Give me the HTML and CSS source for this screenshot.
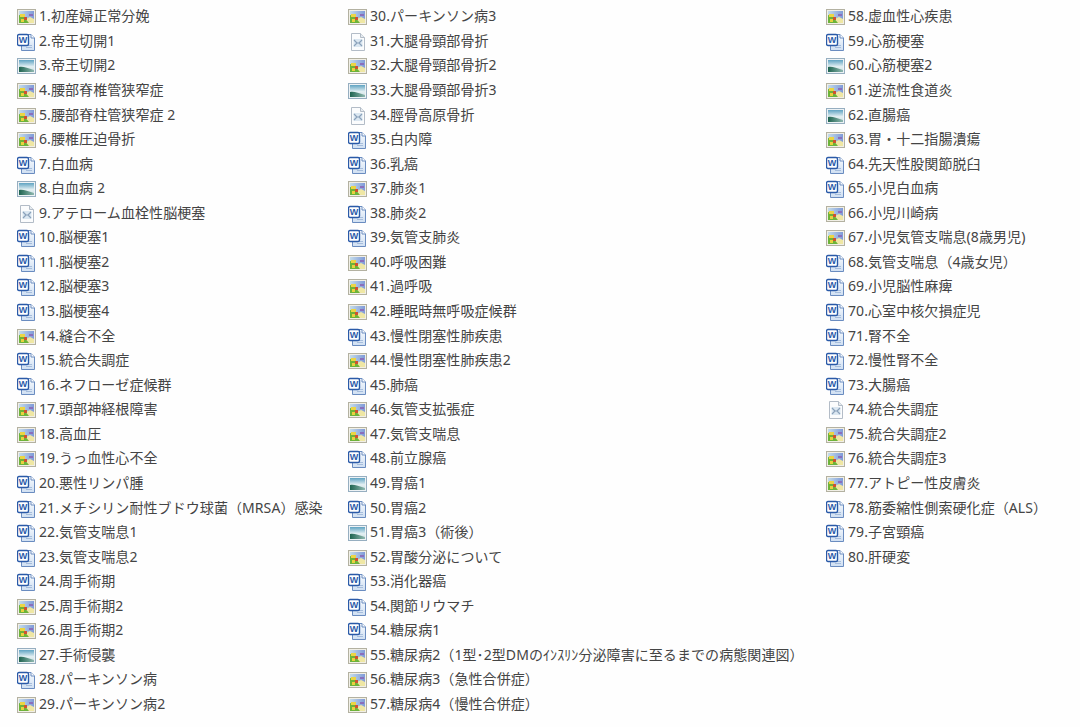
FILE: index.html
```html
<!DOCTYPE html>
<html lang="ja">
<head>
    <meta charset="UTF-8">
    <title>疾患別 関連図 一覧</title>
    <link rel="stylesheet" href="styles.css">
</head>
<body>
    <!-- icon sheet -->
    <svg class="icon-defs" aria-hidden="true">
        <defs>
            <linearGradient id="skyPic" x1="0" y1="0" x2="1" y2="0">
                <stop offset="0" stop-color="#c4dcea"/>
                <stop offset="1" stop-color="#7f9ad8"/>
            </linearGradient>
            <linearGradient id="skyLand" x1="0" y1="0" x2="0" y2="1">
                <stop offset="0" stop-color="#5fa3c2"/>
                <stop offset="0.55" stop-color="#e2eff2"/>
                <stop offset="1" stop-color="#cfe0e2"/>
            </linearGradient>
            <linearGradient id="hillLand" x1="0" y1="0" x2="1" y2="0">
                <stop offset="0" stop-color="#1f6450"/>
                <stop offset="1" stop-color="#8fb8b0"/>
            </linearGradient>
            <linearGradient id="pageBlue" x1="0" y1="0" x2="0" y2="1">
                <stop offset="0" stop-color="#f8fbfe"/>
                <stop offset="1" stop-color="#cfdff2"/>
            </linearGradient>
            <symbol id="pic" viewBox="0 0 19 18">
                <rect x="0.5" y="1.5" width="18" height="15" fill="#f1efe6" stroke="#b3b1a1"/>
                <rect x="2" y="3" width="15" height="12" fill="url(#skyPic)"/>
                <path d="M9 11 L13 9 L17 11 L17 15 L9 15 Z" fill="#efe7a4"/>
                <path d="M2 7 L6 8 L12 15 L2 15 Z" fill="#6db33a"/>
                <rect x="3" y="6" width="5" height="3" fill="#ecd544"/>
                <rect x="4" y="11" width="3" height="3" fill="#e8d23e"/>
                <rect x="7" y="9" width="3" height="3" fill="#cf5230"/>
                <rect x="12" y="6" width="4" height="2" fill="#8a6fbc"/>
            </symbol>
            <symbol id="word" viewBox="0 0 19 18">
                <path d="M4.5 1.5 H14 L17.5 5 V17.5 H4.5 Z" fill="url(#pageBlue)" stroke="#6a8cc0"/>
                <path d="M14 1.5 V5 H17.5" fill="#fff" stroke="#6a8cc0"/>
                <path d="M9 12.5 H15 M9 14.5 H15" stroke="#a6bddc"/>
                <rect x="0.5" y="1.5" width="11" height="11" rx="1.5" fill="#fff" stroke="#2a5aa8" stroke-width="1.4"/>
                <text class="word-mark" x="6" y="10.4">W</text>
            </symbol>
            <symbol id="land" viewBox="0 0 19 18">
                <rect x="0.5" y="1.5" width="18" height="15" fill="#edf2f5" stroke="#96aec0"/>
                <rect x="2" y="3" width="15" height="12" fill="url(#skyLand)"/>
                <path d="M2 10 C6 9 10 11 17 13 V15 H2 Z" fill="url(#hillLand)"/>
            </symbol>
            <symbol id="blank" viewBox="0 0 19 18">
                <path d="M3.5 0.5 H12.5 L16.5 4.5 V17.5 H3.5 Z" fill="#fbfcfd" stroke="#b3bcc7"/>
                <path d="M12.5 0.5 V4.5 H16.5" fill="#e6ebf0" stroke="#b3bcc7"/>
                <rect x="5.5" y="6" width="9" height="8" fill="#dbe7f1"/>
                <path d="M6 7 L9 10 L6 13 M14 7 L11 10 L14 13 M9 10 H11" fill="none" stroke="#8aa1ba" stroke-width="1.2"/>
            </symbol>
        </defs>
    </svg>

    <div class="file-list">
        <ul class="file-column">
            <li class="file-row"><svg class="file-icon"><use href="#pic"/></svg><span>1.初産婦正常分娩</span></li>
            <li class="file-row"><svg class="file-icon"><use href="#word"/></svg><span>2.帝王切開1</span></li>
            <li class="file-row"><svg class="file-icon"><use href="#land"/></svg><span>3.帝王切開2</span></li>
            <li class="file-row"><svg class="file-icon"><use href="#pic"/></svg><span>4.腰部脊椎管狭窄症</span></li>
            <li class="file-row"><svg class="file-icon"><use href="#pic"/></svg><span>5.腰部脊柱管狭窄症 2</span></li>
            <li class="file-row"><svg class="file-icon"><use href="#pic"/></svg><span>6.腰椎圧迫骨折</span></li>
            <li class="file-row"><svg class="file-icon"><use href="#word"/></svg><span>7.白血病</span></li>
            <li class="file-row"><svg class="file-icon"><use href="#land"/></svg><span>8.白血病 2</span></li>
            <li class="file-row"><svg class="file-icon"><use href="#blank"/></svg><span>9.アテローム血栓性脳梗塞</span></li>
            <li class="file-row"><svg class="file-icon"><use href="#word"/></svg><span>10.脳梗塞1</span></li>
            <li class="file-row"><svg class="file-icon"><use href="#word"/></svg><span>11.脳梗塞2</span></li>
            <li class="file-row"><svg class="file-icon"><use href="#word"/></svg><span>12.脳梗塞3</span></li>
            <li class="file-row"><svg class="file-icon"><use href="#word"/></svg><span>13.脳梗塞4</span></li>
            <li class="file-row"><svg class="file-icon"><use href="#pic"/></svg><span>14.縫合不全</span></li>
            <li class="file-row"><svg class="file-icon"><use href="#word"/></svg><span>15.統合失調症</span></li>
            <li class="file-row"><svg class="file-icon"><use href="#word"/></svg><span>16.ネフローゼ症候群</span></li>
            <li class="file-row"><svg class="file-icon"><use href="#pic"/></svg><span>17.頭部神経根障害</span></li>
            <li class="file-row"><svg class="file-icon"><use href="#pic"/></svg><span>18.高血圧</span></li>
            <li class="file-row"><svg class="file-icon"><use href="#pic"/></svg><span>19.うっ血性心不全</span></li>
            <li class="file-row"><svg class="file-icon"><use href="#word"/></svg><span>20.悪性リンパ腫</span></li>
            <li class="file-row"><svg class="file-icon"><use href="#word"/></svg><span>21.メチシリン耐性ブドウ球菌（MRSA）感染</span></li>
            <li class="file-row"><svg class="file-icon"><use href="#word"/></svg><span>22.気管支喘息1</span></li>
            <li class="file-row"><svg class="file-icon"><use href="#word"/></svg><span>23.気管支喘息2</span></li>
            <li class="file-row"><svg class="file-icon"><use href="#word"/></svg><span>24.周手術期</span></li>
            <li class="file-row"><svg class="file-icon"><use href="#pic"/></svg><span>25.周手術期2</span></li>
            <li class="file-row"><svg class="file-icon"><use href="#pic"/></svg><span>26.周手術期2</span></li>
            <li class="file-row"><svg class="file-icon"><use href="#land"/></svg><span>27.手術侵襲</span></li>
            <li class="file-row"><svg class="file-icon"><use href="#word"/></svg><span>28.パーキンソン病</span></li>
            <li class="file-row"><svg class="file-icon"><use href="#pic"/></svg><span>29.パーキンソン病2</span></li>
        </ul>
        <ul class="file-column">
            <li class="file-row"><svg class="file-icon"><use href="#pic"/></svg><span>30.パーキンソン病3</span></li>
            <li class="file-row"><svg class="file-icon"><use href="#blank"/></svg><span>31.大腿骨頸部骨折</span></li>
            <li class="file-row"><svg class="file-icon"><use href="#pic"/></svg><span>32.大腿骨頸部骨折2</span></li>
            <li class="file-row"><svg class="file-icon"><use href="#land"/></svg><span>33.大腿骨頸部骨折3</span></li>
            <li class="file-row"><svg class="file-icon"><use href="#blank"/></svg><span>34.脛骨高原骨折</span></li>
            <li class="file-row"><svg class="file-icon"><use href="#word"/></svg><span>35.白内障</span></li>
            <li class="file-row"><svg class="file-icon"><use href="#word"/></svg><span>36.乳癌</span></li>
            <li class="file-row"><svg class="file-icon"><use href="#pic"/></svg><span>37.肺炎1</span></li>
            <li class="file-row"><svg class="file-icon"><use href="#word"/></svg><span>38.肺炎2</span></li>
            <li class="file-row"><svg class="file-icon"><use href="#word"/></svg><span>39.気管支肺炎</span></li>
            <li class="file-row"><svg class="file-icon"><use href="#pic"/></svg><span>40.呼吸困難</span></li>
            <li class="file-row"><svg class="file-icon"><use href="#pic"/></svg><span>41.過呼吸</span></li>
            <li class="file-row"><svg class="file-icon"><use href="#pic"/></svg><span>42.睡眠時無呼吸症候群</span></li>
            <li class="file-row"><svg class="file-icon"><use href="#word"/></svg><span>43.慢性閉塞性肺疾患</span></li>
            <li class="file-row"><svg class="file-icon"><use href="#pic"/></svg><span>44.慢性閉塞性肺疾患2</span></li>
            <li class="file-row"><svg class="file-icon"><use href="#word"/></svg><span>45.肺癌</span></li>
            <li class="file-row"><svg class="file-icon"><use href="#pic"/></svg><span>46.気管支拡張症</span></li>
            <li class="file-row"><svg class="file-icon"><use href="#pic"/></svg><span>47.気管支喘息</span></li>
            <li class="file-row"><svg class="file-icon"><use href="#word"/></svg><span>48.前立腺癌</span></li>
            <li class="file-row"><svg class="file-icon"><use href="#land"/></svg><span>49.胃癌1</span></li>
            <li class="file-row"><svg class="file-icon"><use href="#word"/></svg><span>50.胃癌2</span></li>
            <li class="file-row"><svg class="file-icon"><use href="#land"/></svg><span>51.胃癌3（術後）</span></li>
            <li class="file-row"><svg class="file-icon"><use href="#pic"/></svg><span>52.胃酸分泌について</span></li>
            <li class="file-row"><svg class="file-icon"><use href="#word"/></svg><span>53.消化器癌</span></li>
            <li class="file-row"><svg class="file-icon"><use href="#word"/></svg><span>54.関節リウマチ</span></li>
            <li class="file-row"><svg class="file-icon"><use href="#word"/></svg><span>54.糖尿病1</span></li>
            <li class="file-row"><svg class="file-icon"><use href="#pic"/></svg><span>55.糖尿病2（1型･2型DMのｲﾝｽﾘﾝ分泌障害に至るまでの病態関連図）</span></li>
            <li class="file-row"><svg class="file-icon"><use href="#pic"/></svg><span>56.糖尿病3（急性合併症）</span></li>
            <li class="file-row"><svg class="file-icon"><use href="#pic"/></svg><span>57.糖尿病4（慢性合併症）</span></li>
        </ul>
        <ul class="file-column">
            <li class="file-row"><svg class="file-icon"><use href="#pic"/></svg><span>58.虚血性心疾患</span></li>
            <li class="file-row"><svg class="file-icon"><use href="#word"/></svg><span>59.心筋梗塞</span></li>
            <li class="file-row"><svg class="file-icon"><use href="#land"/></svg><span>60.心筋梗塞2</span></li>
            <li class="file-row"><svg class="file-icon"><use href="#pic"/></svg><span>61.逆流性食道炎</span></li>
            <li class="file-row"><svg class="file-icon"><use href="#land"/></svg><span>62.直腸癌</span></li>
            <li class="file-row"><svg class="file-icon"><use href="#pic"/></svg><span>63.胃・十二指腸潰瘍</span></li>
            <li class="file-row"><svg class="file-icon"><use href="#word"/></svg><span>64.先天性股関節脱臼</span></li>
            <li class="file-row"><svg class="file-icon"><use href="#word"/></svg><span>65.小児白血病</span></li>
            <li class="file-row"><svg class="file-icon"><use href="#pic"/></svg><span>66.小児川崎病</span></li>
            <li class="file-row"><svg class="file-icon"><use href="#pic"/></svg><span>67.小児気管支喘息(8歳男児)</span></li>
            <li class="file-row"><svg class="file-icon"><use href="#word"/></svg><span>68.気管支喘息（4歳女児）</span></li>
            <li class="file-row"><svg class="file-icon"><use href="#word"/></svg><span>69.小児脳性麻痺</span></li>
            <li class="file-row"><svg class="file-icon"><use href="#word"/></svg><span>70.心室中核欠損症児</span></li>
            <li class="file-row"><svg class="file-icon"><use href="#word"/></svg><span>71.腎不全</span></li>
            <li class="file-row"><svg class="file-icon"><use href="#word"/></svg><span>72.慢性腎不全</span></li>
            <li class="file-row"><svg class="file-icon"><use href="#word"/></svg><span>73.大腸癌</span></li>
            <li class="file-row"><svg class="file-icon"><use href="#blank"/></svg><span>74.統合失調症</span></li>
            <li class="file-row"><svg class="file-icon"><use href="#pic"/></svg><span>75.統合失調症2</span></li>
            <li class="file-row"><svg class="file-icon"><use href="#pic"/></svg><span>76.統合失調症3</span></li>
            <li class="file-row"><svg class="file-icon"><use href="#pic"/></svg><span>77.アトピー性皮膚炎</span></li>
            <li class="file-row"><svg class="file-icon"><use href="#word"/></svg><span>78.筋委縮性側索硬化症（ALS）</span></li>
            <li class="file-row"><svg class="file-icon"><use href="#word"/></svg><span>79.子宮頸癌</span></li>
            <li class="file-row"><svg class="file-icon"><use href="#word"/></svg><span>80.肝硬変</span></li>
        </ul>
    </div>
</body>
</html>
```

FILE: styles.css
```css
/* General styles */
body {
    margin: 0;
    background-color: #fefefe;
    color: #444;
    font-family: "Noto Sans", "Noto Sans CJK JP", sans-serif;
    font-size: 14px;
    letter-spacing: 0.08px;
}

.icon-defs {
    position: absolute;
    width: 0;
    height: 0;
}

.file-list {
    display: grid;
    grid-template-columns: 331px 478px 1fr;
    padding: 3px 0 0 17px;
}

.file-column {
    margin: 0;
    padding: 0;
    list-style: none;
}

.file-row {
    display: flex;
    align-items: center;
    gap: 3px;
    height: 24.57px;
    white-space: nowrap;
}

.file-icon {
    flex: none;
    width: 19px;
    height: 18px;
    margin-top: 4px;
}

.word-mark {
    font-family: "Liberation Sans", sans-serif;
    font-size: 9px;
    font-weight: bold;
    text-anchor: middle;
    fill: #2a5aa8;
}
```
